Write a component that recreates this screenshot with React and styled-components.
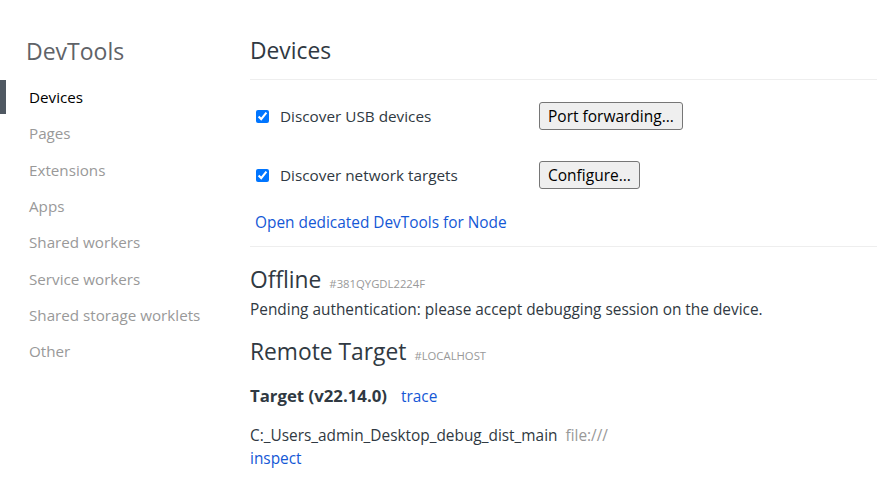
import React from "react";
import styled, { createGlobalStyle } from "styled-components";

const Global = createGlobalStyle`
  html, body { margin: 0; padding: 0; background: #fff; }
  body { font-family: "Open Sans", "Noto Sans", sans-serif; color: #303942; }
`;

const Page = styled.div`
  display: flex;
  width: 877px;
  height: 498px;
  overflow: hidden;
`;

const Sidebar = styled.nav`
  width: 250px;
  flex-shrink: 0;
  display: flex;
  flex-direction: column;
  padding-top: 36px;
`;

const Brand = styled.h1`
  margin: 0 0 13px 26px;
  font-size: 23px;
  font-weight: 400;
  color: #5f6368;
  line-height: 30px;
`;

const NavItem = styled.div`
  position: relative;
  height: 36.3px;
  display: flex;
  align-items: center;
  padding-left: 29px;
  font-size: 15.2px;
  color: ${(p) => (p.$active ? "#000" : "#999")};
  &::before {
    content: "";
    display: ${(p) => (p.$active ? "block" : "none")};
    position: absolute;
    left: 0;
    top: 1px;
    width: 6px;
    height: 34px;
    background: #4f5862;
  }
`;

const Main = styled.main`
  flex: 1;
  padding-top: 36px;
`;

const Title = styled.h2`
  margin: 0;
  font-size: 22.8px;
  font-weight: 400;
  line-height: 30px;
  color: #303942;
  padding-bottom: 13px;
  border-bottom: 1px solid #eeeeee;
`;

const Settings = styled.div`
  display: flex;
  flex-direction: column;
  padding: 22px 0 0 5px;
`;

const OptionRow = styled.div`
  display: flex;
  align-items: center;
  height: 28px;
  margin-bottom: ${(p) => p.$gap || 0}px;
`;

const CheckLabel = styled.label`
  display: flex;
  align-items: center;
  width: 284px;
  font-size: 15.3px;
  color: #303942;
  input {
    margin: 0 11px 0 1px;
    width: 13px;
    height: 13px;
    accent-color: #0075ff;
  }
`;

const Button = styled.button`
  height: 28px;
  padding: 0 8px;
  font-family: "Open Sans", "Noto Sans", sans-serif;
  font-size: 15.5px;
  color: #000;
  background: #efefef;
  border: 1px solid #767676;
  border-radius: 3px;
`;

const Link = styled.a`
  color: #1558d6;
  font-size: 15.4px;
  text-decoration: none;
  cursor: pointer;
  margin-left: ${(p) => p.$ml || 0}px;
`;

const NodeLink = styled.div`
  height: 20px;
  display: flex;
  align-items: center;
  padding-bottom: 14px;
  border-bottom: 1px solid #eeeeee;
  margin-left: -5px;
  padding-left: 5px;
`;

const Section = styled.section`
  display: flex;
  flex-direction: column;
`;

const DeviceHeader = styled.div`
  display: flex;
  align-items: baseline;
  margin-top: ${(p) => p.$mt || 0}px;
  line-height: 30px;
  height: 30px;
`;

const DeviceName = styled.span`
  font-size: 22.8px;
  color: #303942;
`;

const Serial = styled.span`
  font-size: 11.3px;
  color: #999;
  margin-left: 8px;
`;

const Message = styled.div`
  font-size: 15.4px;
  color: #303942;
  line-height: 20px;
  margin-top: 5px;
`;

const TargetRow = styled.div`
  display: flex;
  align-items: baseline;
  margin-top: 19px;
  line-height: 20px;
  height: 20px;
`;

const TargetName = styled.span`
  font-size: 16.8px;
  font-weight: 700;
  color: #303942;
`;

const Url = styled.div`
  margin-top: 20px;
  font-size: 15.4px;
  line-height: 20px;
  color: #303942;
`;

const Dim = styled.span`
  color: #999;
  margin-left: 8px;
`;

const ActionLine = styled.div`
  line-height: 20px;
  margin-top: 2px;
`;

const navItems = [
  "Devices",
  "Pages",
  "Extensions",
  "Apps",
  "Shared workers",
  "Service workers",
  "Shared storage worklets",
  "Other",
];

export default function App() {
  return (
    <>
      <Global />
      <Page>
        <Sidebar>
          <Brand>DevTools</Brand>
          {navItems.map((n, i) => (
            <NavItem key={n} $active={i === 0}>
              {n}
            </NavItem>
          ))}
        </Sidebar>
        <Main>
          <Title>Devices</Title>
          <Settings>
            <OptionRow $gap={31}>
              <CheckLabel>
                <input type="checkbox" defaultChecked />
                Discover USB devices
              </CheckLabel>
              <Button>Port forwarding...</Button>
            </OptionRow>
            <OptionRow $gap={23}>
              <CheckLabel>
                <input type="checkbox" defaultChecked />
                Discover network targets
              </CheckLabel>
              <Button>Configure...</Button>
            </OptionRow>
            <NodeLink>
              <Link>Open dedicated DevTools for Node</Link>
            </NodeLink>
          </Settings>
          <Section>
            <DeviceHeader $mt={18}>
              <DeviceName>Offline</DeviceName>
              <Serial>#381QYGDL2224F</Serial>
            </DeviceHeader>
            <Message>Pending authentication: please accept debugging session on the device.</Message>
            <DeviceHeader $mt={17}>
              <DeviceName>Remote Target</DeviceName>
              <Serial>#LOCALHOST</Serial>
            </DeviceHeader>
            <TargetRow>
              <TargetName>Target (v22.14.0)</TargetName>
              <Link $ml={14}>trace</Link>
            </TargetRow>
            <Url>
              C:_Users_admin_Desktop_debug_dist_main<Dim>file:///</Dim>
            </Url>
            <ActionLine>
              <Link>inspect</Link>
            </ActionLine>
          </Section>
        </Main>
      </Page>
    </>
  );
}
